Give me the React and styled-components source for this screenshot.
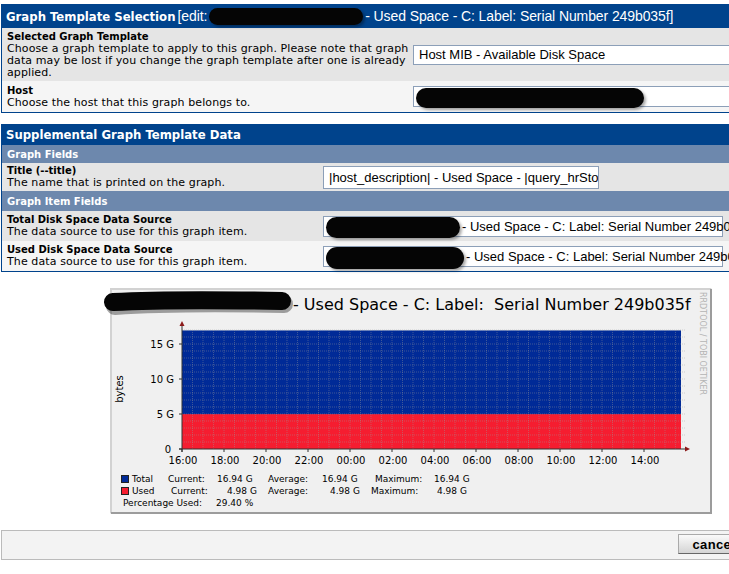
import React from "react";
import styled, { createGlobalStyle } from "styled-components";

const GlobalStyle = createGlobalStyle`
  html, body {
    margin: 0;
    padding: 0;
    background: #fff;
    overflow: hidden;
  }
  body {
    font-family: "DejaVu Sans", Verdana, sans-serif;
    color: #000;
  }
`;

const Page = styled.div`
  width: 820px;
  padding: 4px 0 0 1px;
`;

const EditTable = styled.div`
  border-left: 1px solid #00438c;
  border-bottom: 1px solid #00438c;
  margin-bottom: ${(p) => p.$gap || 0}px;
`;

const Header = styled.div`
  height: ${(p) => p.$h}px;
  background: #00438c;
  color: #fff;
  display: flex;
  align-items: center;
  padding: 0 5px;
  margin-left: -1px;
  white-space: nowrap;
  font-family: "DejaVu Sans Condensed", "DejaVu Sans", sans-serif;
  font-stretch: condensed;
  font-weight: bold;
  font-size: 13px;
`;

const HeaderNote = styled.span`
  display: inline-flex;
  align-items: center;
  margin-left: 2px;
  font-family: "Liberation Sans", Arial, sans-serif;
  font-weight: normal;
  font-stretch: normal;
  font-size: 14px;
  letter-spacing: -0.1px;
`;

const SubHeader = styled.div`
  height: ${(p) => p.$h}px;
  background: #6d88ad;
  color: #fff;
  display: flex;
  align-items: center;
  padding-left: 5px;
  font-size: 10px;
  font-weight: bold;
`;

const Row = styled.div`
  display: grid;
  grid-template-columns: ${(p) => p.$label}px 1fr;
  align-items: center;
  background: ${(p) => (p.$alt ? "#f5f5f5" : "#e5e5e5")};
  min-height: ${(p) => p.$h}px;
`;

const Label = styled.div`
  padding: 0 4px 0 5px;
  font-size: 11px;
  letter-spacing: 0.1px;
  line-height: 12px;
  white-space: nowrap;
`;

const LabelTitle = styled.div`
  font-size: 10px;
  letter-spacing: 0;
  font-weight: bold;
`;

const Field = styled.div`
  display: flex;
  align-items: center;
  box-sizing: border-box;
  width: ${(p) => p.$w}px;
  height: ${(p) => p.$h || 21}px;
  padding: 0 5px;
  border: 1px solid #8c9fb8;
  background: #fff;
  white-space: nowrap;
  overflow: ${(p) => (p.$clip ? "hidden" : "visible")};
  font-family: "Liberation Sans", Arial, sans-serif;
  font-size: 13px;
  color: #000;
`;

const Redact = styled.span`
  display: inline-block;
  flex: none;
  width: ${(p) => p.$w}px;
  height: ${(p) => p.$h}px;
  margin: ${(p) => p.$m || "0"};
  background: #050505;
  border-radius: ${(p) => p.$h / 2}px;
  box-shadow: 2px 2px 3px rgba(0, 0, 0, 0.35);
  vertical-align: middle;
`;

const GraphWrap = styled.div`
  display: flex;
  justify-content: center;
  padding: 16px 0 16px;
`;

const Footer = styled.div`
  height: 28px;
  border: 1px solid #bbb;
  background: #f3f3f3;
  display: flex;
  align-items: center;
  justify-content: flex-end;
  gap: 4px;
  padding-right: 14px;
`;

const Button = styled.button`
  height: 20px;
  margin-top: -2px;
  padding: 0 10px 0 14px;
  border: 1px solid #666;
  border-top-color: #aaa;
  border-left-color: #aaa;
  background: linear-gradient(#fafafa, #d4d4d4);
  font-family: "Liberation Sans", Arial, sans-serif;
  font-size: 13px;
  font-weight: bold;
  color: #000;
  letter-spacing: 0.3px;
`;

// rrdtool style graph, drawn as an image
const X0 = 72;
const X1 = 571;
const Y0 = 161;
const PX_G = 7;
const PX_H = 21;

const hours = ["16:00", "18:00", "20:00", "22:00", "00:00", "02:00", "04:00", "06:00", "08:00", "10:00", "12:00", "14:00"];

const Graph = () => {
  const vMinor = [];
  for (let x = X0 + 10.5; x < X1; x += 10.5) vMinor.push(x);
  const hMinor = [];
  for (let g = 1; g <= 17; g++) hMinor.push(Y0 - g * PX_G);
  const blueTop = Y0 - 16.94 * PX_G;
  const redTop = Y0 - 4.98 * PX_G;
  const legend = { fontSize: 9, fill: "#000", fontFamily: "DejaVu Sans, sans-serif" };
  const axis = { fontSize: 10, fill: "#000", fontFamily: "DejaVu Sans, sans-serif" };

  return (
    <svg width="602" height="226" viewBox="0 0 602 226" style={{ overflow: "visible", display: "block" }}>
      <rect x="0" y="0" width="602" height="226" fill="#f0f0f0" />
      <path d="M1 225 V1 H601" stroke="#d2d2d2" strokeWidth="2" fill="none" />
      <path d="M1 225 H601 V1" stroke="#9c9c9c" strokeWidth="2" fill="none" />

      <text x="183" y="22" fontSize="16" fontFamily="DejaVu Sans, sans-serif" fill="#000">
        - Used Space - C: Label:{"\u00a0 "}Serial Number 249b035f
      </text>
      <path d="M3 16 C60 12 120 13 172 14" stroke="rgba(0,0,0,0.35)" strokeWidth="18" strokeLinecap="round" fill="none" transform="translate(2 2)" />
      <path d="M3 14 C60 11 120 12 172 13" stroke="#050505" strokeWidth="18" strokeLinecap="round" fill="none" />

      <text
        transform="translate(590 4) rotate(90)"
        fontSize="8"
        fontFamily="DejaVu Sans, sans-serif"
        fill="#b4b4b4"
      >
        RRDTOOL / TOBI OETIKER
      </text>

      <rect x={X0} y={blueTop} width={X1 - X0} height={Y0 - blueTop} fill="#002a97" />
      <rect x={X0} y={redTop} width={X1 - X0} height={Y0 - redTop} fill="#f51d30" />

      {vMinor.map((x) => (
        <line key={"v" + x} x1={x} x2={x} y1={Y0} y2={Y0 - 17 * PX_G} stroke="#9a9a9a" strokeOpacity="0.5" strokeDasharray="1 1" strokeWidth="0.8" />
      ))}
      {hMinor.map((y) => (
        <line key={"h" + y} x1={X0} x2={X1 + 4} y1={y} y2={y} stroke="#9a9a9a" strokeOpacity="0.5" strokeDasharray="1 1" strokeWidth="0.8" />
      ))}

      <line x1={X0} x2={X0} y1={Y0 + 3} y2={36} stroke="#333" strokeWidth="1" />
      <line x1={X0 - 3} x2={X1 + 5} y1={Y0} y2={Y0} stroke="#333" strokeWidth="1" />
      <path d={`M${X0 - 2.5} 38 L${X0} 33 L${X0 + 2.5} 38 Z`} fill="#8b1a1a" />
      <path d={`M${X1 + 4} ${Y0 - 2.5} L${X1 + 9} ${Y0} L${X1 + 4} ${Y0 + 2.5} Z`} fill="#8b1a1a" />

      {[0, 5, 10, 15].map((g) => (
        <g key={"y" + g}>
          <line x1={X0 - 3} x2={X0} y1={Y0 - g * PX_G} y2={Y0 - g * PX_G} stroke="#333" />
          <text x={g === 0 ? 61 : 64} y={Y0 - g * PX_G + 3.5} textAnchor="end" {...axis}>
            {g === 0 ? "0" : `${g} G`}
          </text>
        </g>
      ))}

      {hours.map((h, i) => (
        <g key={h}>
          <line x1={X0 + i * 2 * PX_H} x2={X0 + i * 2 * PX_H} y1={Y0} y2={Y0 + 3} stroke="#333" />
          <text x={X0 + i * 2 * PX_H + 1} y="176" textAnchor="middle" {...axis}>
            {h}
          </text>
        </g>
      ))}

      <text transform="translate(13 101) rotate(-90)" textAnchor="middle" fontSize="10" fontFamily="DejaVu Sans, sans-serif" fill="#000">
        bytes
      </text>

      <rect x="11.5" y="187.5" width="7" height="7" fill="#002a97" stroke="#222" />
      <text x="22" y="194" {...legend}>Total</text>
      <text x="58" y="194" {...legend}>Current:</text>
      <text x="107" y="194" {...legend}>16.94 G</text>
      <text x="158" y="194" {...legend}>Average:</text>
      <text x="212" y="194" {...legend}>16.94 G</text>
      <text x="265" y="194" {...legend}>Maximum:</text>
      <text x="324" y="194" {...legend}>16.94 G</text>

      <rect x="11.5" y="199.5" width="7" height="7" fill="#f51d30" stroke="#222" />
      <text x="22" y="206" {...legend}>Used</text>
      <text x="61" y="206" {...legend}>Current:</text>
      <text x="117" y="206" {...legend}>4.98 G</text>
      <text x="158" y="206" {...legend}>Average:</text>
      <text x="220" y="206" {...legend}>4.98 G</text>
      <text x="261" y="206" {...legend}>Maximum:</text>
      <text x="327" y="206" {...legend}>4.98 G</text>

      <text x="13" y="218" {...legend}>Percentage Used:</text>
      <text x="106" y="218" {...legend}>29.40 %</text>
    </svg>
  );
};

const App = () => {
  return (
    <Page>
      <GlobalStyle />
      <EditTable $gap={11}>
        <Header $h={24}>
          Graph Template Selection
          <HeaderNote>
            [edit:
            <Redact $w={154} $h={17} $m="0 2px 0 2px" />
            - Used Space - C: Label: Serial Number 249b035f]
          </HeaderNote>
        </Header>
        <Row $label={411} $h={53}>
          <Label>
            <LabelTitle>Selected Graph Template</LabelTitle>
            Choose a graph template to apply to this graph. Please note that graph
            <br />
            data may be lost if you change the graph template after one is already
            <br />
            applied.
          </Label>
          <Field $w={400} $h={20}>Host MIB - Available Disk Space</Field>
        </Row>
        <Row $label={411} $h={31} $alt>
          <Label>
            <LabelTitle>Host</LabelTitle>
            Choose the host that this graph belongs to.
          </Label>
          <Field $w={400}>
            <Redact $w={228} $h={20} $m="2px 0 0 -3px" />
          </Field>
        </Row>
      </EditTable>

      <EditTable>
        <Header $h={21}>Supplemental Graph Template Data</Header>
        <SubHeader $h={18}>Graph Fields</SubHeader>
        <Row $label={321} $h={28}>
          <Label>
            <LabelTitle>Title (--title)</LabelTitle>
            The name that is printed on the graph.
          </Label>
          <Field $w={276} $h={23} $clip>
            |host_description| - Used Space - |query_hrSto
          </Field>
        </Row>
        <SubHeader $h={20}>Graph Item Fields</SubHeader>
        <Row $label={321} $h={30}>
          <Label>
            <LabelTitle>Total Disk Space Data Source</LabelTitle>
            The data source to use for this graph item.
          </Label>
          <Field $w={400}>
            <Redact $w={134} $h={21} $m="3px 2px 0 -3px" />
            - Used Space - C: Label: Serial Number 249b035f
          </Field>
        </Row>
        <Row $label={321} $h={30} $alt>
          <Label>
            <LabelTitle>Used Disk Space Data Source</LabelTitle>
            The data source to use for this graph item.
          </Label>
          <Field $w={400}>
            <Redact $w={138} $h={22} $m="3px 2px 0 -3px" />
            - Used Space - C: Label: Serial Number 249b035f
          </Field>
        </Row>
      </EditTable>

      <GraphWrap>
        <Graph />
      </GraphWrap>

      <Footer>
        <Button>cancel</Button>
        <Button>save</Button>
      </Footer>
    </Page>
  );
};

export default App;
